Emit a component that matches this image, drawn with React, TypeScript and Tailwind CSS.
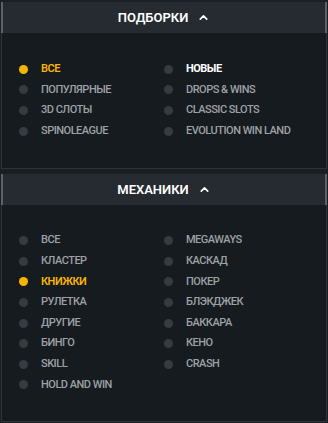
import { ChevronUp } from 'lucide-react'

type Item = { label: string; state?: 'active' | 'bold' }

const picks: Item[][] = [
  [{ label: 'Все', state: 'active' }, { label: 'Популярные' }, { label: '3D слоты' }, { label: 'Spinoleague' }],
  [{ label: 'Новые', state: 'bold' }, { label: 'Drops & Wins' }, { label: 'Classic slots' }, { label: 'Evolution Win Land' }],
]

const mechanics: Item[][] = [
  [
    { label: 'Все' },
    { label: 'Кластер' },
    { label: 'Книжки', state: 'active' },
    { label: 'Рулетка' },
    { label: 'Другие' },
    { label: 'Бинго' },
    { label: 'Skill' },
    { label: 'Hold and Win' },
  ],
  [
    { label: 'Megaways' },
    { label: 'Каскад' },
    { label: 'Покер' },
    { label: 'Блэкджек' },
    { label: 'Баккара' },
    { label: 'Кено' },
    { label: 'Crash' },
  ],
]

function Row({ item }: { item: Item }) {
  const active = item.state === 'active'
  const bold = item.state === 'bold'
  return (
    <div className="flex items-center h-[20.6px] gap-[13px]">
      <span className={`w-[9px] h-[9px] rounded-full shrink-0 ${active ? 'bg-[#f7b500]' : 'bg-[#363b42]'}`} />
      <span
        className={`uppercase text-[11px] tracking-[-0.5px] whitespace-nowrap ${
          active ? 'text-[#f7b500] font-semibold' : bold ? 'text-white font-bold' : 'text-[#9da1a6] font-medium'
        }`}
      >
        {item.label}
      </span>
    </div>
  )
}

function Panel({ title, cols, pad }: { title: string; cols: Item[][]; pad: string }) {
  return (
    <section>
      <header className="h-[31px] flex items-center justify-center gap-[9px] bg-[#262a31] border-x-2 border-[#5d6268]">
        <span className="text-white text-[13px] font-semibold uppercase">{title}</span>
        <ChevronUp size={13} strokeWidth={3} className="text-white" />
      </header>
      <div className={`grid grid-cols-[145px_1fr] bg-[#161b1f] border-x border-b border-[#2e3339] pl-[17px] ${pad}`}>
        {cols.map((col, i) => (
          <div key={i} className="flex flex-col">
            {col.map((item) => (
              <Row key={item.label} item={item} />
            ))}
          </div>
        ))}
      </div>
    </section>
  )
}

export default function App() {
  return (
    <main className="w-[328px] h-[423px] bg-[#1b1f23] pt-[2px] px-[1px] flex flex-col gap-[5px] font-['Roboto',sans-serif]">
      <Panel title="Подборки" cols={picks} pad="pt-[26px] pb-[27px]" />
      <Panel title="Механики" cols={mechanics} pad="pt-[25px] pb-[26px]" />
    </main>
  )
}
